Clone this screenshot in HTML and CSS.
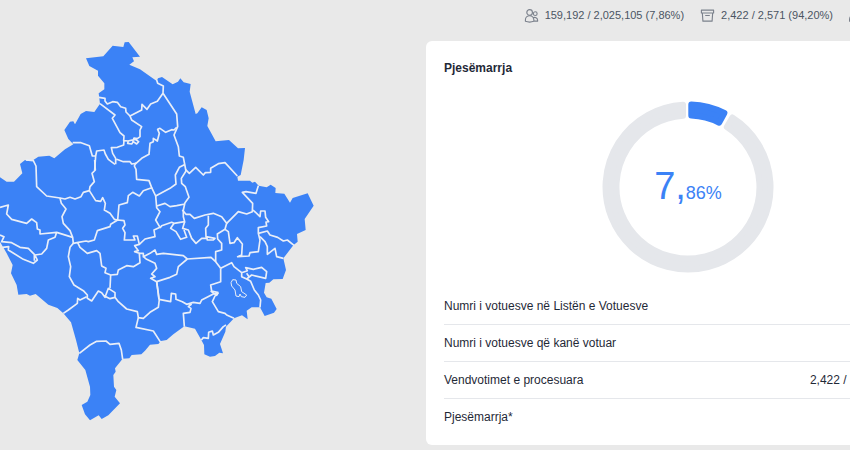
FILE: index.html
```html
<!DOCTYPE html>
<html lang="sq">
<head>
<meta charset="utf-8">
<title>Pjesëmarrja</title>
<link rel="stylesheet" href="styles.css">
</head>
<body>
<div class="page">
  <header class="stats">
    <span class="stat">
      <svg class="icon" viewBox="0 0 16 16" aria-hidden="true"><circle cx="6" cy="4.7" r="3"/><circle cx="12" cy="6" r="2"/><path d="M1.5 14.2v-1.5a4.5 4.5 0 0 1 9 0v1.5q-4.5 1.6-9 0zM10.8 14h3.7v-1.2a3 3 0 0 0-4.6-2.3"/></svg>
      159,192 / 2,025,105 (7,86%)
    </span>
    <span class="stat">
      <svg class="icon" viewBox="0 0 16 16" aria-hidden="true"><path d="M1.5 2.3h13v3h-13zM2.5 5.3l.6 8.7h9.8l.6-8.7M6 8h4"/></svg>
      2,422 / 2,571 (94,20%)
    </span>
    <span class="stat">
      <svg class="icon" viewBox="0 0 16 16" aria-hidden="true"><path d="M.6 14v-2a5 5 0 0 1 10 0v2z"/></svg>
    </span>
  </header>
  <main class="content">
    <section class="map-panel">
      <svg class="map" viewBox="0 123 1278 1140" role="img" aria-label="Harta e komunave">
        <path class="land" d="M258 175L310 169 338 137 370 141 374 127 386 126 420 170 397 172 402 184 388 194 420 208 470 243 474 235 486 231 518 253 534 245 541 235 551 247 572 252 569 275 587 342 592 340 605 322 620 330 626 355 622 378 647 424 687 420 714 445 735 444 731 480 722 525 712 530 714 542 750 542 757 548 765 545 776 557 800 562 812 554 827 564 826 579 853 581 870 608 878 594 923 580 941 617 914 657 917 690 891 702 893 725 880 736 850 775 858 810 848 837 820 838 808 848 797 849 792 878 800 892 814 896 830 927 822 938 794 948 780 922 755 922 740 932 743 958 726 946 702 955 678 980 676 995 660 1032 669 1060 658 1058 645 1068 630 1070 613 1063 612 1035 604 1020 585 986 553 979 520 1003 500 1020 483 1023 475 1032 450 1034 435 1052 424 1063 395 1065 388 1075 368 1076 345 1105 347 1115 340 1125 342 1160 349 1170 344 1190 360 1210 325 1246 305 1257 296 1246 270 1261 255 1243 245 1215 262 1205 271 1185 270 1160 256 1110 232 1080 238 1060 228 1020 213 967 190 940 172 924 145 914 107 882 90 887 80 882 55 884 50 855 33 820 38 795 20 760 0 725 -10 725V525L0 532 20 545 42 545 67 520 60 492 75 480 82 483 100 480 115 470 148 467 163 475 195 448 220 433 205 417 193 390 210 365 220 364 225 373 242 342 258 333 283 336 300 311 296 280 313 268 313 250 294 227 294 212 268 198z"/>
        <g class="borders">
          <g transform="translate(0 90)">
            <path d="M297 202L315 205 315 213 322 222 338 215 352 217 362 230 377 235 378 246 390 258 425 240 426 223 441 238 452 222 472 214 489 190 490 168 473 160 470 150"/>
            <path d="M300 221L345 255 337 265 360 308 372 318 371 332 385 333 383 340 395 342 400 335 410 342 416 335 406 328 384 333M398 335L402 324 412 326 420 320 420 300 425 290 395 270 390 258"/>
            <path d="M372 330L371 345 352 352 334 353 338 370 347 385 347 403M350 388L370 395 390 395 395 402 408 400 425 385 447 373 450 340 460 335 460 325 472 333 478 310 473 298 480 295 497 307 515 299 522 300 530 292"/>
            <path d="M218 338L243 338 268 347 277 378 287 378 290 363 312 360 316 372 325 388 345 403M287 378L284 420"/>
            <path d="M489 190L530 252 533 290 522 315 535 350 538 378 550 382 558 423"/>
          </g>
          <g transform="translate(0 480)">
            <path d="M78 0L100 2 108 18 110 80 140 108 180 114 195 117 210 112 225 117 243 110 250 97 268 92 270 80 283 65 276 40 286 30 284 0"/>
            <path d="M268 92L287 122 302 124 308 113 316 130 313 150 330 160 343 178 353 180 357 135 382 128 385 107 398 97 418 108 430 92 455 83 447 62 410 58 408 28 403 18 408 8"/>
            <path d="M180 114L184 130 198 147 186 170 190 190 210 212 218 232 220 250 235 247 258 243 265 245 283 240 292 212 330 200 332 193 353 180 372 182 375 195 368 205 375 218 373 240 405 240 400 228 412 228 418 253"/>
            <path d="M455 83L467 108 470 143 480 155 467 180 480 202 462 210 465 230 435 237 418 253 404 257 415 272 404 275 418 280 420 308 400 320 380 317 355 330 352 343 332 345 315 338 318 325 305 318 300 280 290 272 262 280 240 262 233 248"/>
            <path d="M418 280L430 280 430 290 450 280 465 270 470 283 490 280 550 287 562 297 633 292 647 305 662 325M430 290L440 298 465 310 470 325 455 342 465 350 452 355 470 365 510 352 530 343 535 320 562 297"/>
            <path d="M0 142L25 135 20 162 35 178 80 190 95 177 110 188 112 207 120 210 120 222 170 217 218 232M170 217L165 232 145 240 140 265 125 282 105 285 112 300 100 310 70 298 25 270 26 260 8 262M0 225L12 230 5 245 35 248 60 262 85 265 103 283 103 302"/>
            <path d="M220 250L210 262 205 290 212 320 208 350 222 375 250 392 262 405 262 415 275 423 295 393 305 398 315 412 325 385 345 398 345 412 330 416 318 410M332 345L330 385M470 365L475 400 477 418"/>
          </g>
          <g transform="translate(450 480)">
            <path d="M17 108L60 85 78 72 76 45 88 22 103 14M108 33L94 55 95 70 106 80 117 112 105 128 100 150 100 170 104 185 72 190 65 187 35 197 30 204M20 138L45 130 60 140 80 137 105 132"/>
            <path d="M106 28L118 40 137 22 160 45 166 38 182 37 182 25 205 11 225 8 262 48M325 77L318 100 288 95 277 97 308 130 307 155 290 162 265 155 230 190"/>
            <path d="M97 150L108 163 120 163 133 175 165 165 190 160 215 170 230 190 225 208 202 222 203 237 215 250 215 270 197 275 197 305M175 167L175 195 167 205 168 230 195 235 190 240 172 240 170 230M104 185L98 205 115 210 125 235 138 250 155 235 170 235M72 190L62 205 78 215 92 238 110 232 102 210"/>
            <path d="M225 208L235 215 240 250 252 248 262 233 277 252 275 285 263 290 297 288 300 278 325 275 330 240 325 220 325 203 350 198 348 186 356 185 347 172 345 153 332 153 330 170 309 150"/>
            <path d="M325 220L352 213 360 225 383 232 400 243 412 240 432 256M330 230L345 245 352 260 352 283 375 265 380 290 400 295M212 325L245 308 252 320 275 338 292 332 287 323 310 328 335 322 350 335 347 355 305 345 290 357 275 350 275 338"/>
            <path d="M290 340L297 350M290 357L302 364 313 390 325 405 332 420 330 442M212 325L212 365 182 375 185 393 205 398"/>
          </g>
          <g transform="translate(450 810)">
            <path d="M205 68L190 72 155 90 150 100 130 97 110 103 97 95 78 88 77 72 64 70 62 95 27 88M20 35L27 88M125 102L115 110 123 115 120 127 100 130 103 170"/>
            <path d="M205 68L195 78 187 95 205 125 225 130 230 135 252 145M154 210L160 203 175 205 176 187 187 183 190 195 205 187 220 170 228 165M205 68L200 76 182 63"/>
            <path d="M-260 130L-245 120 -218 100 -217 85 -210 90 -190 80M-105 82L-95 95 -70 117 -38 125 -35 143 -20 145 0 127 25 112 28 88"/>
            <path d="M-35 143L-42 172 10 183 32 217M-212 250L-180 225 -160 214 -132 213 -120 223 -93 220 -86 240 -82 268"/>
            <path class="lake" d="M243 38L248 29 258 30 260 40 272 50 275 65 290 75 285 82 274 80 270 72 267 80 258 78 255 60 245 48z"/>
          </g>
        </g>
      </svg>
    </section>
    <section class="card">
      <h2 class="title">Pjesëmarrja</h2>
      <div class="chart">
        <svg class="ring" viewBox="-86 -86 172 172" aria-hidden="true">
          <path class="rest" d="M44.4 -69.5A82.5 82.5 0 1 1 -5 -82.3L-5 -71.3A71.5 71.5 0 1 0 38.8 -60z"/>
          <path class="share" d="M3.3 -82.4A82.5 82.5 0 0 1 36.4 -74L31.2 -64.3A71.5 71.5 0 0 0 3.3 -71.4z"/>
        </svg>
        <p class="percent">7,<small class="decimals">86%</small></p>
      </div>
      <dl class="rows">
        <div class="row"><dt>Numri i votuesve në Listën e Votuesve</dt></div>
        <div class="row"><dt>Numri i votuesve që kanë votuar</dt></div>
        <div class="row"><dt>Vendvotimet e procesuara</dt><dd>2,422 / 2,571 (94,20%)</dd></div>
        <div class="row"><dt>Pjesëmarrja*</dt></div>
      </dl>
    </section>
  </main>
</div>
</body>
</html>
```
FILE: styles.css
```css
* {
  box-sizing: border-box;
}

body {
  margin: 0;
  overflow: hidden;
  background: #e9e9e9;
  color: #1f2937;
  font: 12px/20px "Liberation Sans", Arial, sans-serif;
}

/* The dashboard is wider than its viewport and is clipped on the right. */
.page {
  width: calc(100% + 100px);
}

.stats {
  display: flex;
  justify-content: flex-end;
  gap: 16px;
  padding: 5px 86px 16px 0;
  color: #4b5563;
  font-size: 11px;
}

.stat {
  display: flex;
  align-items: center;
  gap: 6px;
  white-space: nowrap;
}

.icon {
  width: 15px;
  height: 15px;
  fill: none;
  stroke: #7b818c;
  stroke-width: 1.2;
  stroke-linejoin: round;
  stroke-linecap: round;
}

.content {
  display: grid;
  grid-template-columns: 426fr 524fr;
  align-items: start;
}

.map {
  display: block;
  width: 100%;
}

.land {
  fill: #3b82f6;
}

.borders {
  fill: none;
  stroke: #e9eef8;
  stroke-width: 5;
  stroke-linejoin: round;
}

.lake {
  stroke-width: 3;
}

.card {
  padding: 17px 18px 9px;
  border-radius: 6px;
  background: #fff;
}

.title {
  margin: 0;
  font-size: 12px;
  line-height: 20px;
}

.chart {
  display: grid;
  place-items: center;
  margin: 23px 0 15px;
}

.ring,
.percent {
  grid-area: 1 / 1;
}

.ring {
  width: 172px;
}

.rest,
.share {
  fill: #e5e7eb;
  stroke: #e5e7eb;
  stroke-width: 6;
  stroke-linejoin: round;
}

.share {
  fill: #3b82f6;
  stroke: #3b82f6;
}

.percent {
  margin: 0;
  padding-top: 4px;
  color: #3b82f6;
  font-size: 38px;
  line-height: 40px;
}

.decimals {
  font-size: 18px;
}

.rows {
  margin: 0;
}

.row {
  display: flex;
  justify-content: space-between;
  padding: 8px 0;
  border-bottom: 1px solid #e5e7eb;
}

.row:last-child {
  border-bottom-color: transparent;
}

.row dd {
  margin: 0;
  white-space: nowrap;
}
```
